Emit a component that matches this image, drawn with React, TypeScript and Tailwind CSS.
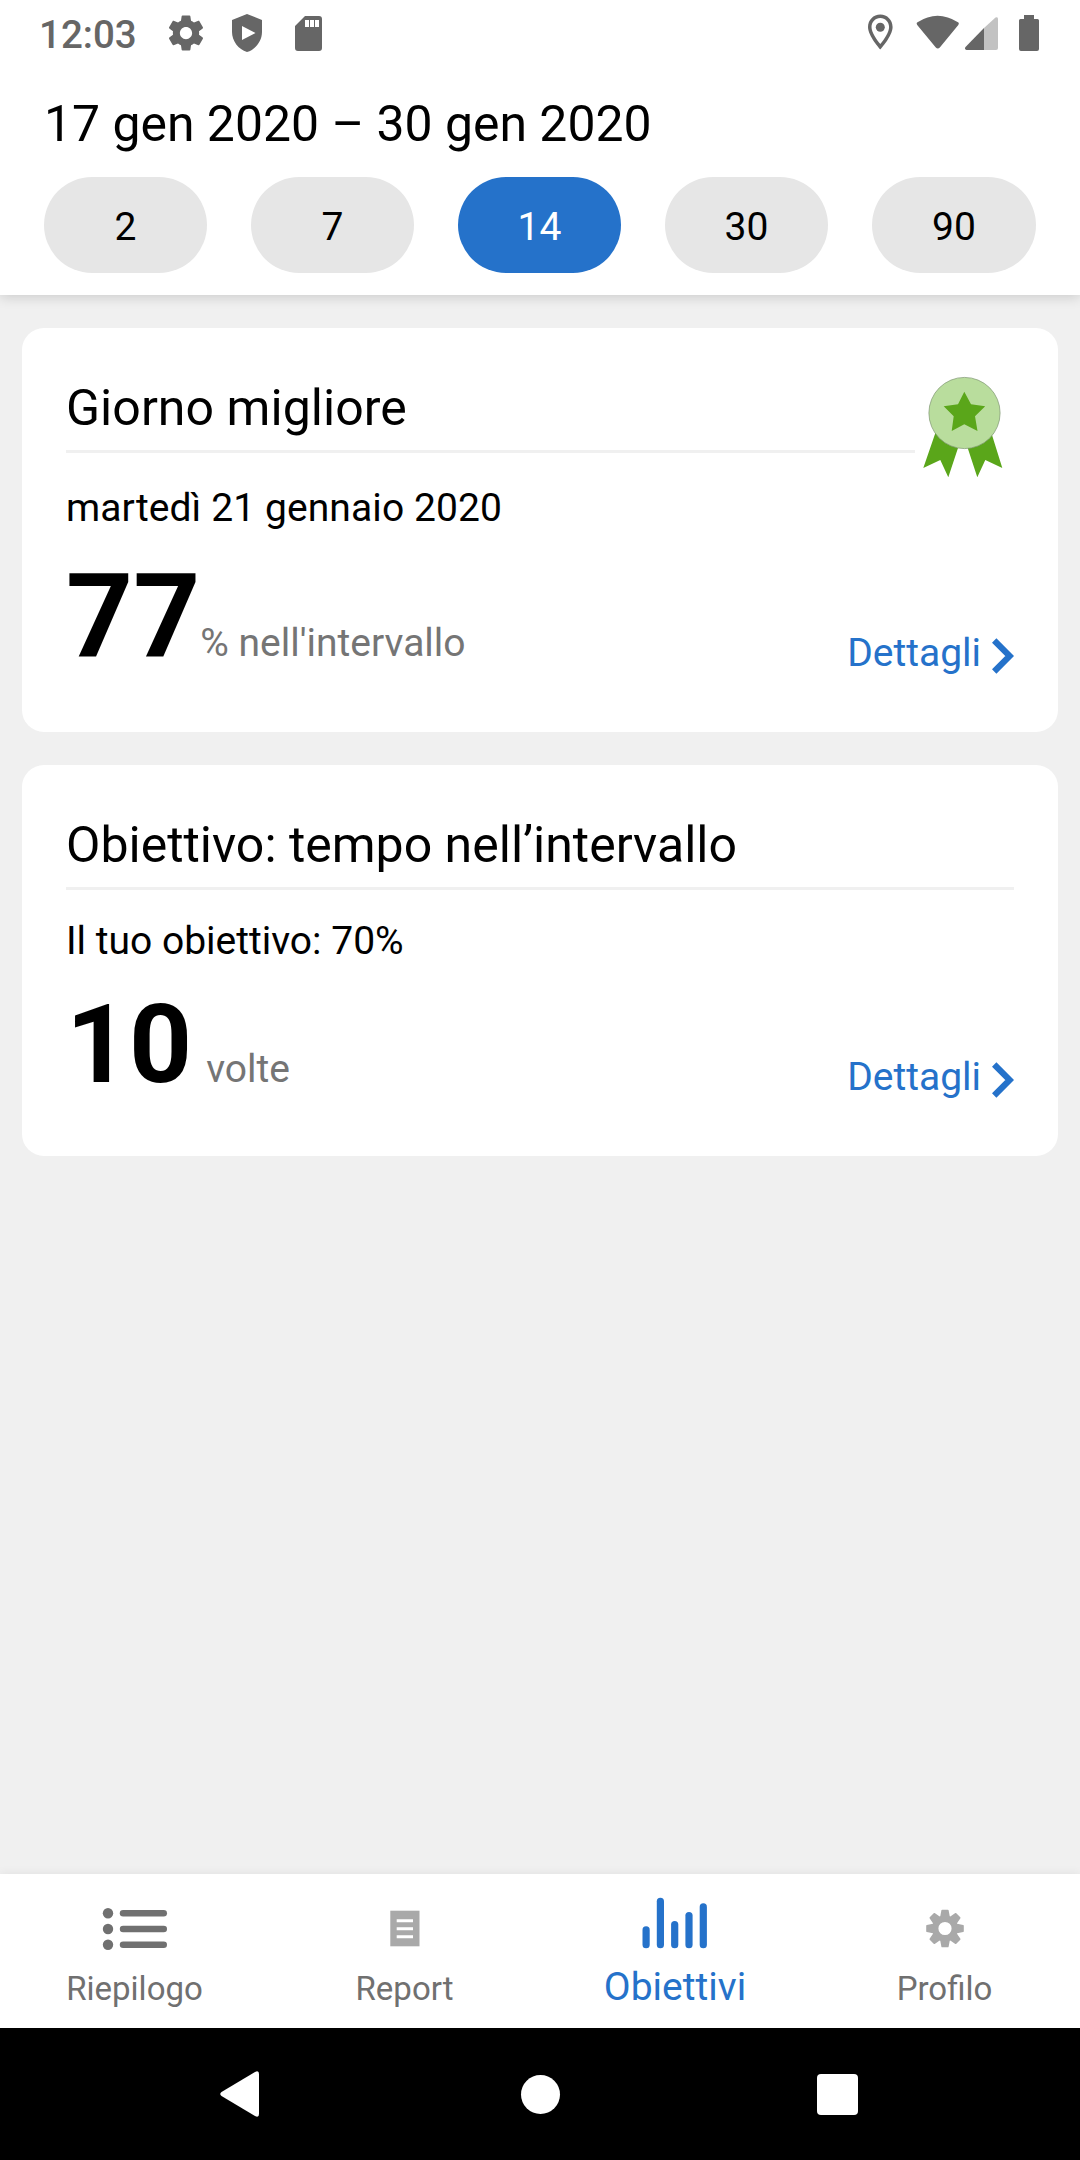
import React from "react";

const periods = [2, 7, 14, 30, 90];

function StatusBar() {
  return (
    <div className="flex h-[66px] items-center justify-between px-[40px] text-[#666666]">
      <div className="flex items-center">
        <span className="-ml-px w-[118px] pt-[4px] text-[38.5px] leading-[66px] font-medium">12:03</span>
        <svg className="ml-[8px]" width="42" height="42" viewBox="0 0 24 24" fill="currentColor">
          <path d="M19.43 12.98c.04-.32.07-.64.07-.98s-.03-.66-.07-.98l2.11-1.65c.19-.15.24-.42.12-.64l-2-3.46c-.12-.22-.39-.3-.61-.22l-2.49 1c-.52-.4-1.08-.73-1.69-.98l-.38-2.65C14.46 2.18 14.25 2 14 2h-4c-.25 0-.46.18-.49.42l-.38 2.65c-.61.25-1.17.59-1.69.98l-2.49-1c-.23-.09-.49 0-.61.22l-2 3.46c-.13.22-.07.49.12.64l2.11 1.65c-.04.32-.07.65-.07.98s.03.66.07.98l-2.11 1.65c-.19.15-.24.42-.12.64l2 3.46c.12.22.39.3.61.22l2.49-1c.52.4 1.08.73 1.69.98l.38 2.65c.03.24.24.42.49.42h4c.25 0 .46-.18.49-.42l.38-2.65c.61-.25 1.17-.59 1.69-.98l2.49 1c.23.09.49 0 .61-.22l2-3.46c.12-.22.07-.49-.12-.64l-2.11-1.65zM12 15.5c-1.93 0-3.5-1.57-3.5-3.5s1.57-3.5 3.5-3.5 3.5 1.57 3.5 3.5-1.57 3.5-3.5 3.5z" />
        </svg>
        <svg className="ml-[24px]" width="32" height="38" viewBox="0 0 32 38" fill="currentColor" fillRule="evenodd">
          <path d="M16 0 31 6v12c0 9-6.5 17.5-15 20C7.5 35.5 1 27 1 18V6ZM11 12v14l13.5-7Z" />
        </svg>
        <svg className="ml-[32px]" width="27" height="35" viewBox="0 0 27 35" fill="currentColor" fillRule="evenodd">
          <path d="M10 0h14q3 0 3 3v29q0 3-3 3H3q-3 0-3-3V10ZM10 4v7h4V4ZM15 4v7h4V4ZM20 4v7h4V4Z" />
        </svg>
      </div>
      <Indicators />
    </div>
  );
}

function Indicators() {
  return (
    <svg width="174" height="40" viewBox="866 13 174 40" fill="#666666">
      <path
        fillRule="evenodd"
        d="M880.3 14.5c-7 0-12.3 5.500-12.3 12.500 0 9 12.300 22.500 12.300 22.500S892.600 36 892.600 27c0-7-5.300-12.500-12.300-12.500Zm0 3.500c5 0 8.800 4 8.800 9 0 5-5 12.500-8.800 17-3.800-4.500-8.800-12-8.800-17 0-5 3.800-9 8.800-9Z"
      />
      <circle cx="880.3" cy="27.3" r="4.5" />
      <path d="M917.5 22.3q20-13 40.500 0 1.500 1 .3 2.600l-18.500 22.500q-2 2-4 0l-18.600-22.500q-1.200-1.600.3-2.600Z" />
      <path d="M984 28v22h-17.500q-2.500-1-1-3Z" />
      <path fill="#c2c2c2" d="M984 28l11.500-10.500q2-1 2.500 1v29.500q0 2-2 2h-12Z" />
      <path d="M1024 15h10v4h3.500q1.500 0 1.500 1.500V49q0 2-2 2h-16q-2 0-2-2V20.500q0-1.500 1.500-1.500h3.500Z" />
    </svg>
  );
}

function Header() {
  return (
    <header className="relative z-10 h-[295px] bg-white shadow-[0_2px_12px_rgba(0,0,0,0.16)]">
      <StatusBar />
      <h1 className="pt-[26px] pl-[44px] text-[49.9px] leading-[64px]">17 gen 2020 – 30 gen 2020</h1>
      <div className="mt-[21px] flex gap-11 px-11">
        {periods.map((days) => (
          <button
            key={days}
            className={`h-[96px] w-[163px] rounded-full pt-[4px] text-[39px] last:w-[164px] ${
              days === 14 ? "bg-[#2572ca] text-white" : "bg-[#e6e6e6] text-black"
            }`}
          >
            {days}
          </button>
        ))}
      </div>
    </header>
  );
}

function Award() {
  return (
    <svg className="absolute top-[48px] left-[900px]" width="82" height="104" viewBox="922 376 82 104">
      <path fill="#5aa61a" d="M935.700 432 923.300 468l17-8 8 17.300L958 448ZM991.700 434l10.600 34-17-8-8 17.300-9.600-29.300Z" />
      <circle cx="964.5" cy="413" r="35.6" fill="#b9dd9d" stroke="#7d9570" strokeWidth=".7" />
      <path fill="#5aa61a" d="m964.300 391.700 6.700 12.600 14.200 2-10.200 10 2.500 14.700-13.200-6.700-12.600 6.700 2-14.700-10-10 14.300-2Z" />
    </svg>
  );
}

function Details() {
  return (
    <a className="flex items-center text-[39px] leading-[46px] text-[#2572ca]">
      Dettagli
      <svg className="mt-[5px] ml-[10px]" width="23" height="36" viewBox="0 0 23 36" fill="none" stroke="currentColor" strokeWidth="6.2">
        <path d="m3.200 2.500 15.500 15.500-15.500 15.500" />
      </svg>
    </a>
  );
}

function BestDayCard() {
  return (
    <section className="relative h-[404px] rounded-[22px] bg-white px-11 pt-[48px]">
      <div className="mr-[99px] h-[77px] border-b-[3px] border-[#f0f0f0]">
        <h2 className="text-[50px] leading-[64px] tracking-[0.05px]">Giorno migliore</h2>
      </div>
      <Award />
      <p className="mt-[32px] text-[39px] leading-[46px] tracking-[0.1px]">martedì 21 gennaio 2020</p>
      <div className="mt-[15px] flex items-start justify-between">
        <div className="flex items-baseline leading-[140px]">
          <span className="text-[117px] font-bold">77</span>
          <span className="text-[39px] text-[#757575]">% nell'intervallo</span>
        </div>
        <div className="mt-[84px]">
          <Details />
        </div>
      </div>
    </section>
  );
}

function GoalCard() {
  return (
    <section className="mt-[33px] h-[391px] rounded-[22px] bg-white px-11 pt-[48px]">
      <div className="h-[77px] border-b-[3px] border-[#f0f0f0]">
        <h2 className="text-[50px] leading-[64px]">Obiettivo: tempo nell’intervallo</h2>
      </div>
      <p className="mt-[28px] text-[39px] leading-[46px]">Il tuo obiettivo: 70%</p>
      <div className="mt-[11px] flex items-start justify-between">
        <div className="flex items-baseline leading-[140px]">
          <span className="text-[110px] font-bold">10</span>
          <span className="ml-[14px] text-[39px] text-[#757575]">volte</span>
        </div>
        <div className="mt-[79px]">
          <Details />
        </div>
      </div>
    </section>
  );
}

function ListIcon() {
  return (
    <svg width="66" height="60" viewBox="102 1894 66 60" fill="#707070">
      {[1913.2, 1929, 1944.8].map((y) => (
        <g key={y}>
          <circle cx="108" cy={y} r="5.2" />
          <rect x="119.8" y={y - 3.3} width="47.2" height="6.6" rx="3.3" />
        </g>
      ))}
    </svg>
  );
}

function ReportIcon() {
  return (
    <svg width="30" height="60" viewBox="390 1894 30 60">
      <rect x="390.3" y="1910.7" width="29.2" height="35.6" fill="#a9a9a9" />
      <path d="M396.7 1920.700H413M396.700 1928.700H413M396.700 1936.700H413" stroke="#fff" strokeWidth="3" />
    </svg>
  );
}

function ChartIcon() {
  const tops = [1926.3, 1897.7, 1921, 1912, 1903.3];
  return (
    <svg width="66" height="60" viewBox="642.3 1894 66 60" fill="#2572ca">
      {tops.map((top, i) => (
        <rect key={top} x={642.8 + i * 14.3} y={top} width="7.2" height={1948.3 - top} rx="3.6" />
      ))}
    </svg>
  );
}

function GearIcon() {
  return (
    <svg width="40" height="60" viewBox="-20 -34.5 40 60" fill="#a9a9a9">
      <circle r="9.8" fill="none" stroke="#a9a9a9" strokeWidth="6.4" />
      {[0, 45, 90, 135, 180, 225, 270, 315].map((angle) => (
        <path key={angle} d="M-5-11-3.600-18.200q.2-.6.800-.6h5.600q.6 0 .8.600L5-11Z" transform={`rotate(${angle})`} />
      ))}
    </svg>
  );
}

const tabs = [
  { label: "Riepilogo", icon: <ListIcon /> },
  { label: "Report", icon: <ReportIcon /> },
  { label: "Obiettivi", icon: <ChartIcon />, active: true },
  { label: "Profilo", icon: <GearIcon /> },
];

function TabBar() {
  return (
    <nav className="grid h-[154px] grid-cols-4 bg-white pt-5 shadow-[0_0_10px_rgba(0,0,0,0.07)]">
      {tabs.map((tab) => (
        <div key={tab.label} className="flex flex-col items-center">
          {tab.icon}
          <span
            className={`leading-[60px] ${
              tab.active ? "mt-[3px] text-[39px] text-[#2572ca]" : "-ml-px mt-[5px] text-[33px] text-[#707070]"
            }`}
          >
            {tab.label}
          </span>
        </div>
      ))}
    </nav>
  );
}

function SystemNav() {
  return (
    <div className="flex h-[132px] items-center bg-black pl-[220px] text-white">
      <svg width="39" height="46" viewBox="0 0 39 46" fill="currentColor">
        <path d="M35 1q4-2 4 2v40q0 4-4 2L1.500 25q-2.500-2 0-4Z" />
      </svg>
      <div className="ml-[262px] size-[39px] rounded-full bg-white" />
      <div className="ml-[257px] size-[41px] rounded-[4px] bg-white" />
    </div>
  );
}

export default function App() {
  return (
    <div className="flex h-[2160px] w-[1080px] flex-col bg-[#f0f0f0] font-[Roboto,sans-serif] text-black">
      <Header />
      <main className="flex-1 px-[22px] pt-[33px]">
        <BestDayCard />
        <GoalCard />
      </main>
      <TabBar />
      <SystemNav />
    </div>
  );
}
